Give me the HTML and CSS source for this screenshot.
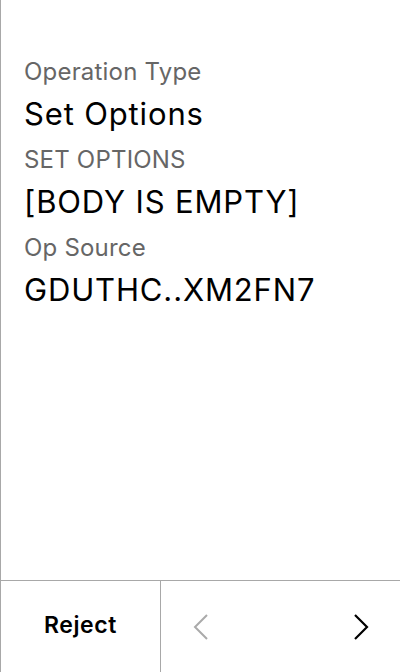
FILE: index.html
```html
<!DOCTYPE html>
<html>
<head>
<meta charset="utf-8">
<link rel="stylesheet" href="styles.css">
</head>
<body>
<div class="screen">
  <main class="content">
    <div class="field">
      <div class="label">Operation Type</div>
      <div class="value">Set Options</div>
    </div>
    <div class="field">
      <div class="label">SET OPTIONS</div>
      <div class="value">[BODY IS EMPTY]</div>
    </div>
    <div class="field">
      <div class="label">Op Source</div>
      <div class="value">GDUTHC..XM2FN7</div>
    </div>
  </main>
  <footer class="bar">
    <div class="reject">Reject</div>
    <div class="nav">
      <svg class="chev prev" width="16" height="26" viewBox="0 0 16 26"><path d="M14 1 L2 13 L14 25" fill="none" stroke="currentColor" stroke-width="2"/></svg>
      <svg class="chev next" width="16" height="26" viewBox="0 0 16 26"><path d="M2 1 L14 13 L2 25" fill="none" stroke="currentColor" stroke-width="2.2"/></svg>
    </div>
  </footer>
</div>
</body>
</html>
```
FILE: styles.css
```css
html, body {
  margin: 0;
  padding: 0;
  background: #fff;
}
body {
  font-family: Inter, "Noto Sans", sans-serif;
  color: #000;
}
.screen {
  width: 399px;
  height: 672px;
  border-left: 1px solid #a8a8a8;
  display: flex;
  flex-direction: column;
}
.content {
  flex: 1;
  padding: 58px 24px 0 23px;
}
.field {
  margin-bottom: 14px;
}
.label {
  font-size: 24px;
  letter-spacing: 0.2px;
  line-height: 28px;
  color: #666;
  margin-bottom: 10px;
}
.value {
  font-size: 31px;
  letter-spacing: 0.85px;
  line-height: 36px;
  color: #000;
}
.bar {
  height: 91px;
  border-top: 1px solid #a8a8a8;
  display: flex;
}
.reject {
  width: 159px;
  border-right: 1px solid #a8a8a8;
  display: flex;
  align-items: center;
  justify-content: center;
  font-size: 23px;
  letter-spacing: 0.6px;
  font-weight: 600;
  padding-bottom: 3px;
}
.nav {
  flex: 1;
  display: flex;
  align-items: center;
  justify-content: space-between;
  padding: 0 31px 0 32px;
}
.chev.prev { color: #aaa; }
.chev.next { color: #000; }
```
